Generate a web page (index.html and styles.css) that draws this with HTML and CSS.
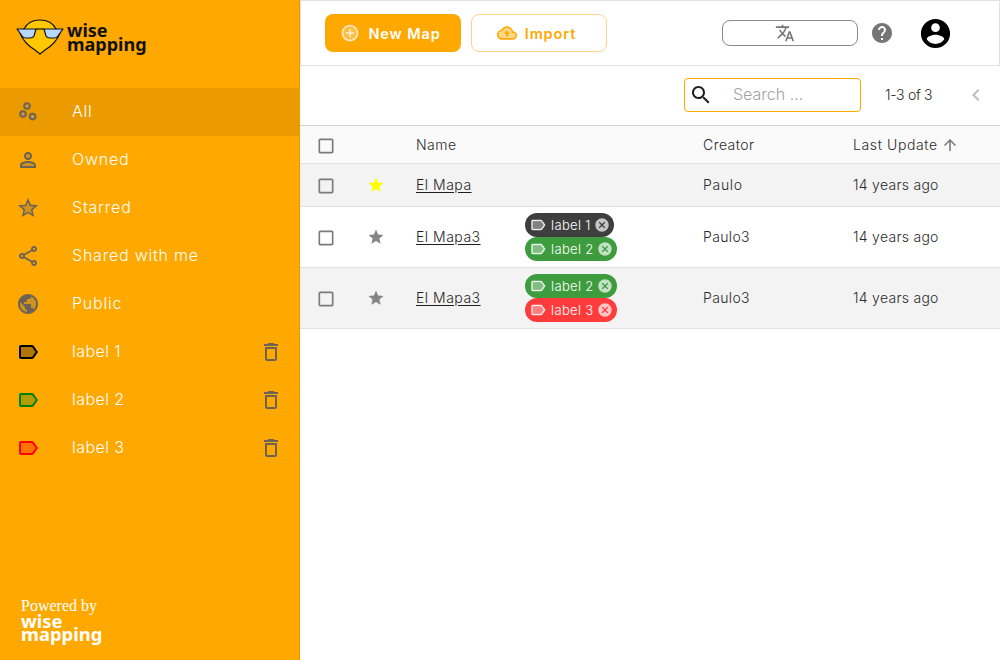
FILE: index.html
```html
<!DOCTYPE html>
<html lang="en">
<head>
<meta charset="utf-8">
<title>WiseMapping</title>
<link rel="stylesheet" href="styles.css">
</head>
<body>
<div class="app">
  <aside class="sidebar">
    <div class="brand">
      <svg class="bird" viewBox="0 0 48 36" width="48" height="36">
        <path d="M8 10C11 4 17 1 24 1C31 1 37 4 40 10L44 14C41 22 34 28 29 31L24 35L19 31C14 28 7 22 4 14Z" fill="#ffc800" stroke="#111" stroke-width="1.2" stroke-linejoin="round"/>
        <path d="M1 10H20L18 17Q17 19 14 19H10Q7.500 19 6.500 17.500Z" fill="#b7d7ff" stroke="#111" stroke-width="1.2" stroke-linejoin="round"/>
        <path d="M47 10H28L30 17Q31 19 34 19H38Q40.500 19 41.500 17.500Z" fill="#b7d7ff" stroke="#111" stroke-width="1.2" stroke-linejoin="round"/>
        <path d="M20 10H28" stroke="#111" stroke-width="1.2"/>
      </svg>
      <div class="brand-text">wise<br>mapping</div>
    </div>
    <nav class="nav">
      <a class="nav-item active">
        <svg class="nav-icon" viewBox="0 0 24 24"><circle cx="7" cy="14" r="2.8"/><circle cx="11" cy="6" r="2.8"/><circle cx="16.6" cy="16.6" r="2.8"/></svg>
        <span>All</span>
      </a>
      <a class="nav-item">
        <svg class="nav-icon" viewBox="0 0 24 24"><path class="tone" d="M12 4c-2.2 0-4 1.800-4 4s1.800 4 4 4 4-1.800 4-4-1.800-4-4-4zm0 9c-2.670 0-8 1.340-8 4v3h16v-3c0-2.660-5.330-4-8-4z"/><path class="solid" d="M12 5.900c1.160 0 2.100.94 2.100 2.100s-.94 2.100-2.100 2.100S9.900 9.160 9.900 8s.94-2.100 2.100-2.100m0 9c2.970 0 6.100 1.460 6.100 2.100v1.100H5.900V17c0-.64 3.130-2.100 6.100-2.100M12 4C9.790 4 8 5.790 8 8s1.790 4 4 4 4-1.790 4-4-1.790-4-4-4zm0 9c-2.670 0-8 1.340-8 4v3h16v-3c0-2.660-5.330-4-8-4z"/></svg>
        <span>Owned</span>
      </a>
      <a class="nav-item">
        <svg class="nav-icon" viewBox="0 0 24 24"><path class="tone" d="M12 15.400l-3.760 2.270 1-4.280-3.320-2.880 4.380-.38L12 6.100l1.710 4.040 4.380.38-3.320 2.880 1 4.280z"/><path class="solid" d="M22 9.240l-7.190-.62L12 2 9.190 8.630 2 9.240l5.460 4.730L5.820 21 12 17.270 18.180 21l-1.630-7.030L22 9.240zM12 15.400l-3.760 2.270 1-4.280-3.320-2.880 4.380-.38L12 6.100l1.710 4.040 4.380.38-3.320 2.880 1 4.280L12 15.400z"/></svg>
        <span>Starred</span>
      </a>
      <a class="nav-item">
        <svg class="nav-icon" viewBox="0 0 24 24"><path class="solid" d="M18 16.080c-.76 0-1.440.3-1.960.77L8.910 12.700c.05-.23.09-.46.09-.7s-.04-.47-.09-.7l7.050-4.110c.54.5 1.250.81 2.040.81 1.660 0 3-1.340 3-3s-1.340-3-3-3-3 1.340-3 3c0 .24.04.47.09.7L8.040 9.810C7.500 9.310 6.790 9 6 9c-1.660 0-3 1.340-3 3s1.340 3 3 3c.79 0 1.500-.31 2.040-.81l7.120 4.160c-.05.21-.08.43-.08.65 0 1.610 1.310 2.920 2.920 2.920s2.920-1.310 2.920-2.920-1.310-2.920-2.920-2.920zM18 4c.55 0 1 .45 1 1s-.45 1-1 1-1-.45-1-1 .45-1 1-1zM6 13c-.55 0-1-.45-1-1s.45-1 1-1 1 .45 1 1-.45 1-1 1zm12 7.020c-.55 0-1-.45-1-1s.45-1 1-1 1 .45 1 1-.45 1-1 1z"/></svg>
        <span>Shared with me</span>
      </a>
      <a class="nav-item">
        <svg class="nav-icon" viewBox="0 0 24 24"><circle class="tone" cx="12" cy="12" r="9"/><path class="solid" d="M12 2C6.480 2 2 6.480 2 12s4.480 10 10 10 10-4.480 10-10S17.520 2 12 2zm-1 17.930c-3.950-.49-7-3.850-7-7.930 0-.62.08-1.210.21-1.790L9 15v1c0 1.100.9 2 2 2v1.930zm6.900-2.540c-.26-.81-1-1.390-1.900-1.390h-1v-3c0-.55-.45-1-1-1H8v-2h2c.55 0 1-.45 1-1V7h2c1.100 0 2-.9 2-2v-.41c2.930 1.190 5 4.060 5 7.410 0 2.080-.8 3.970-2.100 5.390z"/></svg>
        <span>Public</span>
      </a>
      <a class="nav-item nav-label">
        <svg class="nav-icon label-black" viewBox="0 0 24 24"><path class="tone" d="M16 7H5v10h11l3.550-5z"/><path class="solid" d="M17.630 5.840C17.270 5.330 16.670 5 16 5L5 5.010C3.900 5.010 3 5.900 3 7v10c0 1.100.9 1.990 2 1.990L16 19c.67 0 1.270-.33 1.630-.84L22 12l-4.370-6.160zM16 17H5V7h11l3.550 5L16 17z"/></svg>
        <span>label 1</span>
        <svg class="trash" viewBox="0 0 24 24"><path d="M16 9v10H8V9h8m-1.500-6h-5l-1 1H5v2h14V4h-3.500l-1-1zM18 7H6v12c0 1.100.9 2 2 2h8c1.100 0 2-.9 2-2V7z"/></svg>
      </a>
      <a class="nav-item nav-label">
        <svg class="nav-icon label-green" viewBox="0 0 24 24"><path class="tone" d="M16 7H5v10h11l3.550-5z"/><path class="solid" d="M17.630 5.840C17.270 5.330 16.670 5 16 5L5 5.010C3.900 5.010 3 5.900 3 7v10c0 1.100.9 1.990 2 1.990L16 19c.67 0 1.270-.33 1.630-.84L22 12l-4.370-6.160zM16 17H5V7h11l3.550 5L16 17z"/></svg>
        <span>label 2</span>
        <svg class="trash" viewBox="0 0 24 24"><path d="M16 9v10H8V9h8m-1.500-6h-5l-1 1H5v2h14V4h-3.500l-1-1zM18 7H6v12c0 1.100.9 2 2 2h8c1.100 0 2-.9 2-2V7z"/></svg>
      </a>
      <a class="nav-item nav-label">
        <svg class="nav-icon label-red" viewBox="0 0 24 24"><path class="tone" d="M16 7H5v10h11l3.550-5z"/><path class="solid" d="M17.630 5.840C17.270 5.330 16.670 5 16 5L5 5.010C3.900 5.010 3 5.900 3 7v10c0 1.100.9 1.990 2 1.990L16 19c.67 0 1.270-.33 1.630-.84L22 12l-4.370-6.160zM16 17H5V7h11l3.550 5L16 17z"/></svg>
        <span>label 3</span>
        <svg class="trash" viewBox="0 0 24 24"><path d="M16 9v10H8V9h8m-1.500-6h-5l-1 1H5v2h14V4h-3.500l-1-1zM18 7H6v12c0 1.100.9 2 2 2h8c1.100 0 2-.9 2-2V7z"/></svg>
      </a>
    </nav>
    <div class="powered">
      <div class="powered-by">Powered by</div>
      <div class="brand-text white">wise<br>mapping</div>
    </div>
  </aside>
  <main class="main">
    <header class="topbar">
      <button class="btn btn-primary">
        <svg class="btn-icon" viewBox="0 0 24 24"><circle cx="12" cy="12" r="9" class="btn-tone"/><path d="M13 7h-2v4H7v2h4v4h2v-4h4v-2h-4V7zm-1-5C6.480 2 2 6.480 2 12s4.480 10 10 10 10-4.480 10-10S17.520 2 12 2zm0 18c-4.410 0-8-3.590-8-8s3.590-8 8-8 8 3.590 8 8-3.590 8-8 8z"/></svg>
        New Map
      </button>
      <button class="btn btn-outline">
        <svg class="btn-icon" viewBox="0 0 24 24"><path class="btn-tone" d="M19 18H6c-2.210 0-4-1.790-4-4 0-2.050 1.530-3.760 3.560-3.970l1.070-.11.5-.95C8.080 7.140 9.940 6 12 6c2.620 0 4.880 1.860 5.390 4.430l.3 1.500 1.530.11c1.560.1 2.780 1.410 2.780 2.960 0 1.650-1.350 3-3 3z"/><path d="M19.350 10.040C18.670 6.590 15.640 4 12 4 9.110 4 6.600 5.640 5.350 8.040 2.340 8.360 0 10.910 0 14c0 3.310 2.690 6 6 6h13c2.760 0 5-2.240 5-5 0-2.640-2.050-4.780-4.650-4.960zM19 18H6c-2.210 0-4-1.790-4-4 0-2.050 1.530-3.760 3.560-3.970l1.070-.11.5-.95C8.080 7.140 9.940 6 12 6c2.620 0 4.880 1.860 5.390 4.430l.3 1.500 1.530.11c1.560.1 2.780 1.410 2.780 2.960 0 1.650-1.350 3-3 3zM8 13h2.550v3h2.900v-3H16l-4-4z"/></svg>
        Import
      </button>
      <div class="top-right">
        <button class="lang"><svg class="lang-icon" viewBox="0 0 24 24"><path d="M12.870 15.070l-2.540-2.510.03-.03c1.740-1.940 2.980-4.170 3.710-6.530H17V4h-7V2H8v2H1v1.990h11.170C11.500 7.920 10.440 9.750 9 11.350 8.070 10.320 7.300 9.190 6.690 8h-2c.73 1.630 1.730 3.170 2.980 4.560l-5.090 5.020L4 19l5-5 3.110 3.110.76-2.040zM18.500 10h-2L12 22h2l1.120-3h4.750L21 22h2l-4.500-12zm-2.620 7l1.620-4.330L19.120 17h-3.240z"/></svg></button>
        <svg class="help" viewBox="0 0 24 24"><path d="M12 2C6.480 2 2 6.480 2 12s4.480 10 10 10 10-4.480 10-10S17.520 2 12 2zm1 17h-2v-2h2v2zm2.070-7.750l-.9.92C13.450 12.900 13 13.500 13 15h-2v-.5c0-1.100.45-2.100 1.170-2.830l1.240-1.260c.37-.36.59-.86.59-1.410 0-1.100-.9-2-2-2s-2 .9-2 2H8c0-2.210 1.790-4 4-4s4 1.790 4 4c0 .88-.36 1.680-.93 2.250z"/></svg>
        <svg class="account" viewBox="0 0 24 24"><path d="M12 2C6.480 2 2 6.480 2 12s4.480 10 10 10 10-4.480 10-10S17.520 2 12 2zm0 3c1.660 0 3 1.340 3 3s-1.340 3-3 3-3-1.340-3-3 1.340-3 3-3zm0 14.200c-2.500 0-4.710-1.280-6-3.220.03-1.990 4-3.080 6-3.080 1.990 0 5.970 1.090 6 3.080-1.290 1.940-3.500 3.220-6 3.220z"/></svg>
      </div>
    </header>
    <div class="listbar">
      <label class="search">
        <svg class="search-icon" viewBox="0 0 24 24"><path d="M15.500 14h-.79l-.28-.27C15.410 12.590 16 11.110 16 9.500 16 5.910 13.090 3 9.500 3S3 5.910 3 9.500 5.910 16 9.500 16c1.610 0 3.090-.59 4.230-1.570l.27.28v.79l5 4.990L20.490 19l-4.990-5zm-6 0C7.010 14 5 11.990 5 9.500S7.010 5 9.500 5 14 7.010 14 9.500 11.990 14 9.500 14z"/></svg>
        <span class="placeholder">Search ...</span>
      </label>
      <span class="count">1-3 of 3</span>
      <svg class="prev" viewBox="0 0 24 24"><path d="M15.410 7.410L14 6l-6 6 6 6 1.410-1.410L10.830 12z"/></svg>
    </div>
    <div class="table">
      <div class="row head">
        <svg class="check" viewBox="0 0 24 24"><path d="M19 5v14H5V5h14m0-2H5c-1.100 0-2 .9-2 2v14c0 1.100.9 2 2 2h14c1.100 0 2-.9 2-2V5c0-1.100-.9-2-2-2z"/></svg>
        <span></span>
        <span>Name</span>
        <span></span>
        <span>Creator</span>
        <span class="sorted">Last Update <svg class="sort" viewBox="0 0 24 24"><path d="M4 12l1.410 1.410L11 7.830V20h2V7.830l5.580 5.590L20 12l-8-8-8 8z"/></svg></span>
      </div>
      <div class="row shade short">
        <svg class="check" viewBox="0 0 24 24"><path d="M19 5v14H5V5h14m0-2H5c-1.100 0-2 .9-2 2v14c0 1.100.9 2 2 2h14c1.100 0 2-.9 2-2V5c0-1.100-.9-2-2-2z"/></svg>
        <svg class="star yellow" viewBox="0 0 24 24"><path d="M12 17.270L18.180 21l-1.640-7.030L22 9.240l-7.190-.61L12 2 9.190 8.630 2 9.240l5.460 4.730L5.820 21z"/></svg>
        <a class="map-link">El Mapa</a>
        <span></span>
        <span class="creator">Paulo</span>
        <span class="updated">14 years ago</span>
      </div>
      <div class="row">
        <svg class="check" viewBox="0 0 24 24"><path d="M19 5v14H5V5h14m0-2H5c-1.100 0-2 .9-2 2v14c0 1.100.9 2 2 2h14c1.100 0 2-.9 2-2V5c0-1.100-.9-2-2-2z"/></svg>
        <svg class="star" viewBox="0 0 24 24"><path d="M12 17.270L18.180 21l-1.640-7.030L22 9.240l-7.190-.61L12 2 9.190 8.630 2 9.240l5.460 4.730L5.820 21z"/></svg>
        <a class="map-link">El Mapa3</a>
        <div class="chips">
          <span class="chip dark"><svg class="chip-tag" viewBox="0 0 24 24"><path class="tone" d="M16 7H5v10h11l3.550-5z"/><path d="M17.630 5.840C17.270 5.330 16.670 5 16 5L5 5.010C3.900 5.010 3 5.900 3 7v10c0 1.100.9 1.990 2 1.990L16 19c.67 0 1.270-.33 1.630-.84L22 12l-4.370-6.160zM16 17H5V7h11l3.550 5L16 17z"/></svg>label 1<svg class="chip-x" viewBox="0 0 24 24"><path d="M12 2C6.470 2 2 6.470 2 12s4.470 10 10 10 10-4.470 10-10S17.530 2 12 2zm5 13.590L15.590 17 12 13.410 8.410 17 7 15.590 10.590 12 7 8.410 8.410 7 12 10.590 15.590 7 17 8.410 13.410 12 17 15.590z"/></svg></span>
          <span class="chip green"><svg class="chip-tag" viewBox="0 0 24 24"><path class="tone" d="M16 7H5v10h11l3.550-5z"/><path d="M17.630 5.840C17.270 5.330 16.670 5 16 5L5 5.010C3.900 5.010 3 5.900 3 7v10c0 1.100.9 1.990 2 1.990L16 19c.67 0 1.270-.33 1.630-.84L22 12l-4.370-6.160zM16 17H5V7h11l3.550 5L16 17z"/></svg>label 2<svg class="chip-x" viewBox="0 0 24 24"><path d="M12 2C6.470 2 2 6.470 2 12s4.470 10 10 10 10-4.470 10-10S17.530 2 12 2zm5 13.590L15.590 17 12 13.410 8.410 17 7 15.590 10.590 12 7 8.410 8.410 7 12 10.590 15.590 7 17 8.410 13.410 12 17 15.590z"/></svg></span>
        </div>
        <span>Paulo3</span>
        <span class="updated">14 years ago</span>
      </div>
      <div class="row shade">
        <svg class="check" viewBox="0 0 24 24"><path d="M19 5v14H5V5h14m0-2H5c-1.100 0-2 .9-2 2v14c0 1.100.9 2 2 2h14c1.100 0 2-.9 2-2V5c0-1.100-.9-2-2-2z"/></svg>
        <svg class="star" viewBox="0 0 24 24"><path d="M12 17.270L18.180 21l-1.640-7.030L22 9.240l-7.190-.61L12 2 9.190 8.630 2 9.240l5.460 4.730L5.820 21z"/></svg>
        <a class="map-link">El Mapa3</a>
        <div class="chips">
          <span class="chip green"><svg class="chip-tag" viewBox="0 0 24 24"><path class="tone" d="M16 7H5v10h11l3.550-5z"/><path d="M17.630 5.840C17.270 5.330 16.670 5 16 5L5 5.010C3.900 5.010 3 5.900 3 7v10c0 1.100.9 1.990 2 1.990L16 19c.67 0 1.270-.33 1.630-.84L22 12l-4.370-6.160zM16 17H5V7h11l3.550 5L16 17z"/></svg>label 2<svg class="chip-x" viewBox="0 0 24 24"><path d="M12 2C6.470 2 2 6.470 2 12s4.470 10 10 10 10-4.470 10-10S17.530 2 12 2zm5 13.590L15.590 17 12 13.410 8.410 17 7 15.590 10.590 12 7 8.410 8.410 7 12 10.590 15.590 7 17 8.410 13.410 12 17 15.590z"/></svg></span>
          <span class="chip red"><svg class="chip-tag" viewBox="0 0 24 24"><path class="tone" d="M16 7H5v10h11l3.550-5z"/><path d="M17.630 5.840C17.270 5.330 16.670 5 16 5L5 5.010C3.900 5.010 3 5.900 3 7v10c0 1.100.9 1.990 2 1.990L16 19c.67 0 1.270-.33 1.630-.84L22 12l-4.370-6.160zM16 17H5V7h11l3.550 5L16 17z"/></svg>label 3<svg class="chip-x" viewBox="0 0 24 24"><path d="M12 2C6.470 2 2 6.470 2 12s4.470 10 10 10 10-4.470 10-10S17.530 2 12 2zm5 13.590L15.590 17 12 13.410 8.410 17 7 15.590 10.590 12 7 8.410 8.410 7 12 10.590 15.590 7 17 8.410 13.410 12 17 15.590z"/></svg></span>
        </div>
        <span>Paulo3</span>
        <span class="updated">14 years ago</span>
      </div>
    </div>
  </main>
</div>
</body>
</html>
```

FILE: styles.css
```css
* { box-sizing: border-box; }
html, body { margin: 0; height: 100%; overflow: hidden; }
body { font-family: Inter, "Noto Sans", sans-serif; color: #2b2b2b; background: #fff; }
.app { display: flex; width: 1000px; height: 660px; }

.sidebar { width: 300px; flex: none; background: #ffa800; border-right: 1px solid #e89a00; display: flex; flex-direction: column; }
.brand { display: flex; align-items: center; gap: 3px; height: 88px; padding: 0 0 14px 16px; }
.bird { flex: none; }
.brand-text { font-family: "Noto Sans", sans-serif; font-weight: 700; font-size: 18px; line-height: 14px; color: #111; }
.brand-text.white { color: #fff; font-size: 18.4px; line-height: 13px; }
.nav { display: flex; flex-direction: column; }
.nav-item { display: flex; align-items: center; height: 48px; padding: 0 16px; color: #fff; font-size: 16px; font-weight: 300; letter-spacing: .78px; }
.nav-item.nav-label { letter-spacing: .45px; }
.nav-item.active { background: #eb9a00; }
.nav-item span { flex: 1; margin-bottom: 2px; }
.nav-icon { width: 24px; height: 24px; flex: none; margin-right: 32px; fill: #6c6255; }
.nav-icon circle { fill: #d19a3a; stroke: #6c6255; stroke-width: 2; }
.nav-icon .tone, .nav-icon circle.tone { fill: #666; fill-opacity: .3; stroke: none; }
.label-black .solid { fill: #000; }
.label-black .tone { fill: #000; }
.label-green .solid { fill: #008000; }
.label-red .solid { fill: #ff0000; }
.label-green .tone { fill: #008000; }
.label-red .tone { fill: #ff0000; }
.trash { width: 24px; height: 24px; flex: none; fill: #6c6255; }
.powered { margin-top: auto; padding: 0 0 20px 21px; }
.powered-by { font-family: "Liberation Serif", serif; font-size: 16px; color: #fff; line-height: 18px; margin-bottom: -1px; }

.main { flex: 1; min-width: 0; display: flex; flex-direction: column; }
.topbar { display: flex; align-items: center; height: 66px; padding: 0 0 0 24px; gap: 10px; border: 1px solid #e0e0e0; }
.btn { display: flex; align-items: center; justify-content: center; gap: 8px; width: 136px; height: 38px; padding: 0 5px 0 0; border-radius: 8px; font-family: Inter, sans-serif; font-size: 14.5px; font-weight: 600; letter-spacing: .9px; cursor: pointer; }
.btn-icon { width: 20px; height: 20px; flex: none; }
.btn-primary { background: #ffa800; border: 0; color: #fff; }
.btn-primary .btn-icon { fill: #fff; fill-opacity: .75; }
.btn-primary .btn-tone { fill: #fff; fill-opacity: .25; }
.btn-outline { background: #fff; border: 1px solid #ffd48a; color: #ffa800; }
.btn-outline .btn-icon { fill: #ffa800; }
.btn-outline .btn-tone { fill: #ffa800; fill-opacity: .45; }
.top-right { margin-left: auto; display: flex; align-items: center; }
.lang { width: 136px; height: 26px; padding: 0 10px 0 0; background: #fff; border: 1px solid #8a8a8a; border-radius: 8px; display: flex; align-items: center; justify-content: center; }
.lang-icon { width: 20px; height: 20px; fill: #757575; }
.help { width: 24px; height: 24px; flex: none; margin-left: 12px; fill: #757575; }
.account { width: 35px; height: 35px; flex: none; margin: 0 46px 0 24px; fill: #000; }

.listbar { display: flex; align-items: center; height: 60px; padding: 0 0 2px 384px; border-bottom: 1px solid #d0d0d0; }
.search { display: flex; align-items: center; width: 177px; height: 34px; border: 1px solid #ffa800; border-radius: 4px; padding-left: 4px; }
.search-icon { width: 24px; height: 24px; fill: #1f1f1f; flex: none; }
.placeholder { margin: 0 0 2px 20px; font-size: 16px; font-weight: 300; color: #a2a2a2; }
.count { margin-left: 24px; font-size: 14px; font-weight: 300; letter-spacing: -.3px; color: #2b2b2b; }
.prev { width: 24px; height: 24px; margin-left: 32px; fill: #bdbdbd; }

.table { display: flex; flex-direction: column; }
.row { display: grid; grid-template-columns: 66px 50px 109px 178px 150px 1fr; align-items: center; min-height: 61px; border-bottom: 1px solid #e0e0e0; font-size: 14px; font-weight: 300; letter-spacing: .35px; }
.row > span, .row > a { margin-bottom: 2px; }
.row > .check { margin: 2px 0 0 16px; }
.head { min-height: 38px; background: #fafafa; letter-spacing: .45px; }
.head > span { margin-bottom: 0; }
.short { min-height: 43px; }
.shade { background: #f3f3f3; }
.check { width: 20px; height: 20px; fill: #7b7b7b; }
.star { width: 18px; height: 18px; margin-left: 1px; fill: #858585; }
.star.yellow { fill: #ffff00; }
.map-link { color: #1f1f1f; text-decoration: underline; text-underline-offset: 2px; letter-spacing: .5px; }
.creator { letter-spacing: .7px; }
.updated { letter-spacing: .28px; }
.sorted { display: flex; align-items: center; gap: 3px; letter-spacing: .62px; }
.sort { width: 18px; height: 18px; fill: #757575; }
.chips { display: flex; flex-direction: column; align-items: flex-start; }
.chip { display: inline-flex; align-items: center; height: 24px; border-radius: 12px; padding: 0 4px; color: #fff; font-size: 13px; letter-spacing: .35px; }
.chip.dark { background: #3e3e3e; }
.chip.green { background: #3d9c3d; }
.chip.red { background: #ff3b3b; }
.chip-tag { width: 18px; height: 18px; margin-right: 4px; fill: #fff; fill-opacity: .9; }
.chip-tag .tone { fill-opacity: .35; }
.chip-x { width: 16px; height: 16px; margin-left: 3px; fill: #fff; fill-opacity: .7; }
```
